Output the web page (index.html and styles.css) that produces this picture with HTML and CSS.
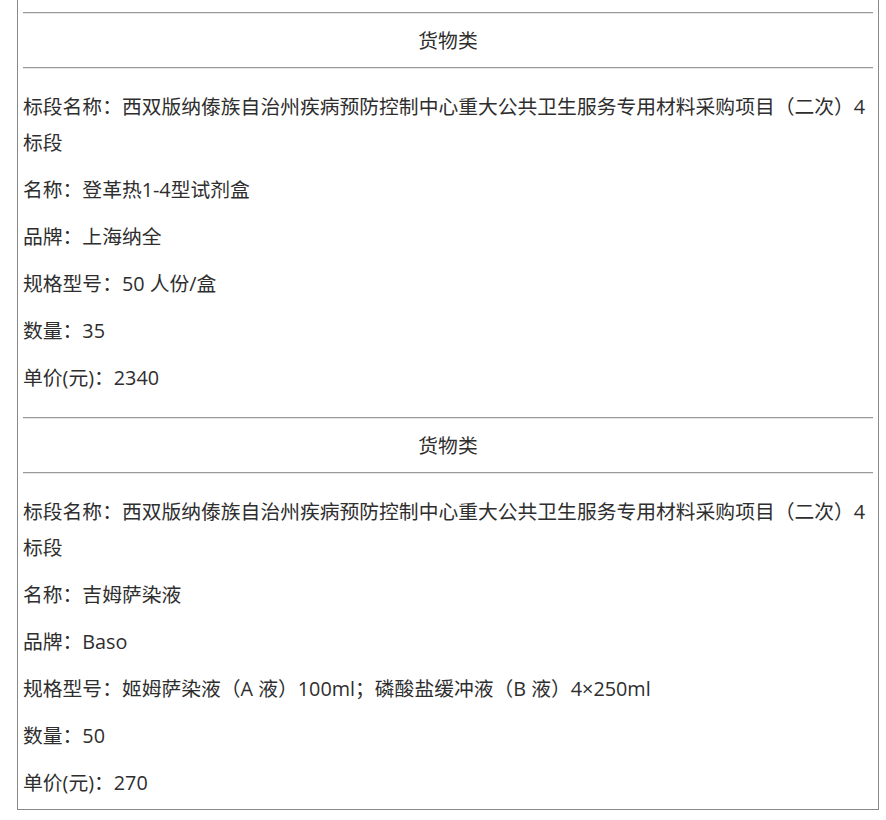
FILE: index.html
```html
<!DOCTYPE html>
<html lang="zh">
<head>
    <meta charset="UTF-8">
    <meta name="viewport" content="width=device-width, initial-scale=1.0">
    <title>采购明细</title>
    <link rel="stylesheet" href="styles.css">
</head>
<body>
    <div class="goods-list">
        <!-- 第一项 -->
        <div class="goods-item">
            <hr>
            <div class="goods-type">货物类</div>
            <hr>
            <p>标段名称：西双版纳傣族自治州疾病预防控制中心重大公共卫生服务专用材料采购项目（二次）4标段</p>
            <p>名称：登革热1-4型试剂盒</p>
            <p>品牌：上海纳全</p>
            <p>规格型号：50 人份/盒</p>
            <p>数量：35</p>
            <p>单价(元)：2340</p>
        </div>

        <!-- 第二项 -->
        <div class="goods-item">
            <hr>
            <div class="goods-type">货物类</div>
            <hr>
            <p>标段名称：西双版纳傣族自治州疾病预防控制中心重大公共卫生服务专用材料采购项目（二次）4标段</p>
            <p>名称：吉姆萨染液</p>
            <p>品牌：Baso</p>
            <p>规格型号：姬姆萨染液（A 液）100ml；磷酸盐缓冲液（B 液）4×250ml</p>
            <p>数量：50</p>
            <p>单价(元)：270</p>
        </div>
    </div>
</body>
</html>
```

FILE: styles.css
```css
body {
    margin: 0;
    background-color: #ffffff;
    font-family: "Open Sans", "Noto Sans CJK SC", sans-serif;
    color: #2e2e2e;
}

.goods-list {
    width: 850px;
    margin: -2px 0 0 17px; /* 上一项已滚出视口 */
    padding: 0 5px;
    border: 1px solid #888888;
    font-size: 19.8px;
}

.goods-item {
    padding: 13px 0 8px;
}

.goods-item hr {
    margin: 0;
    border: 0;
    border-top: 1px solid #9a9a9a;
    border-bottom: 1px solid #e4e4e4;
}

.goods-type {
    text-align: center;
    line-height: 36px;
    margin: 9px 0 8px;
}

.goods-item p {
    margin: 11px 0 0;
    line-height: 36px;
}

.goods-item hr + p {
    margin-top: 20px;
}
```
